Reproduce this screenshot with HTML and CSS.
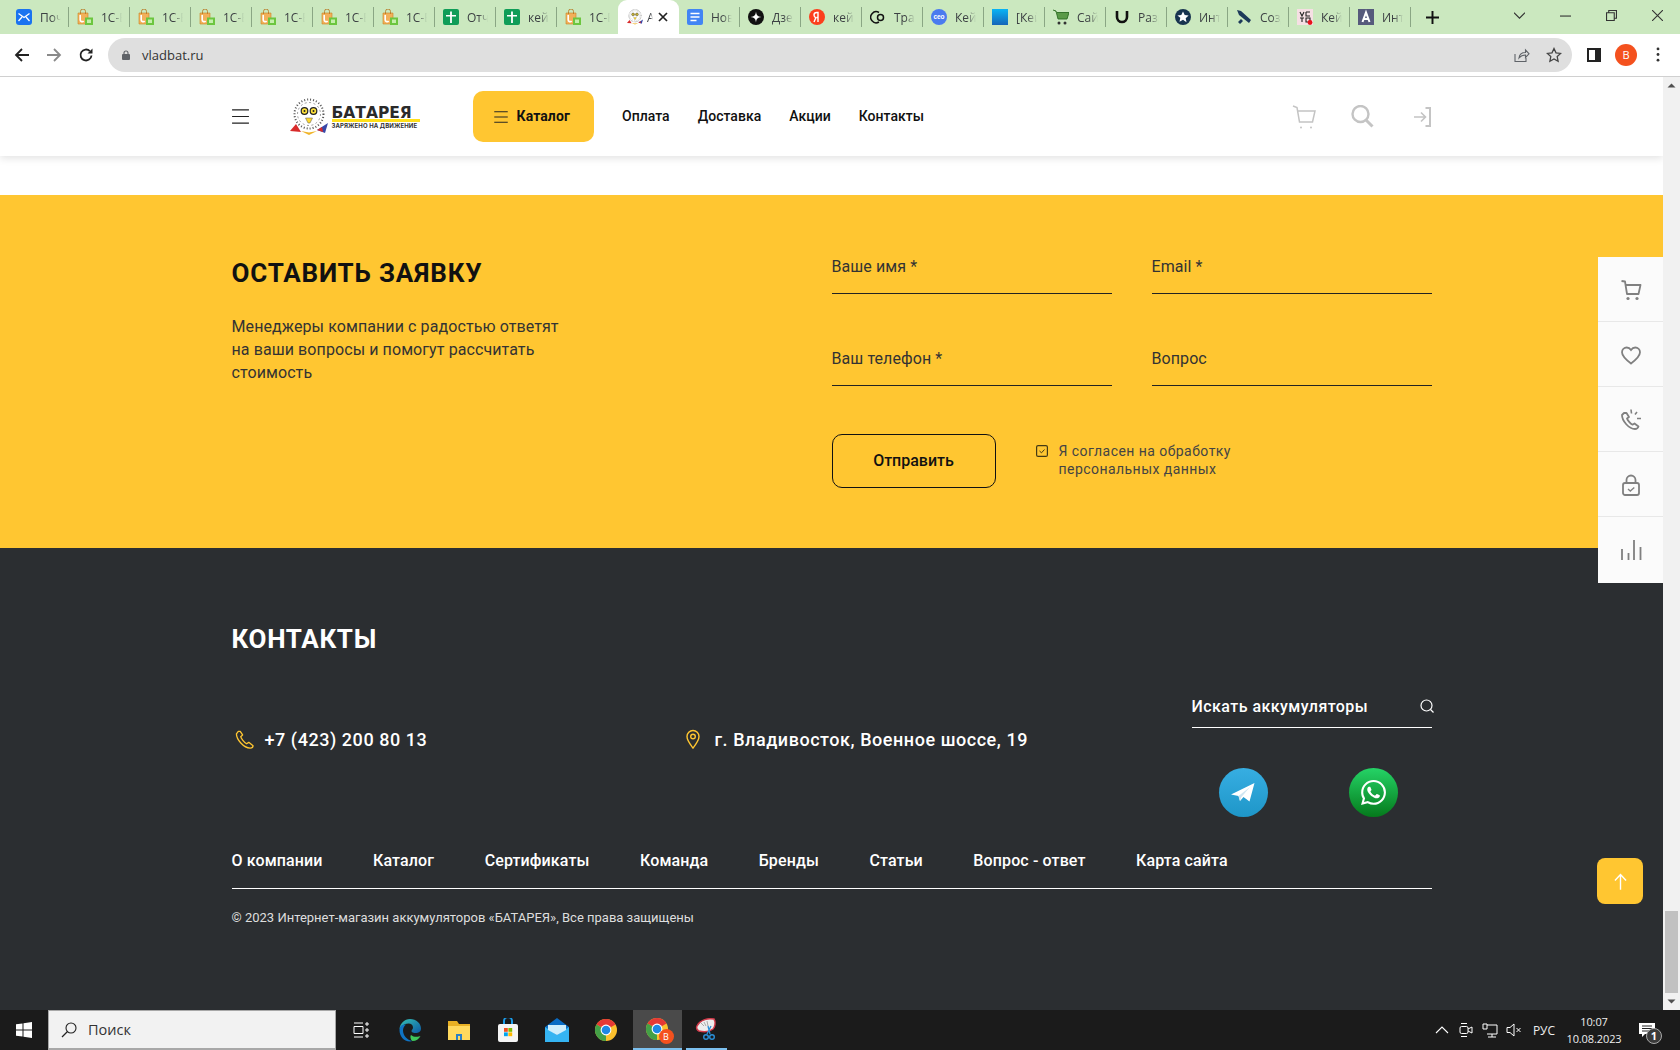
FILE: index.html
```html
<!DOCTYPE html>
<html lang="ru">
<head>
<meta charset="utf-8">
<title>БАТАРЕЯ</title>
<link rel="stylesheet" href="styles.css">
</head>
<body>
<svg class="defs" xmlns="http://www.w3.org/2000/svg">
  <defs>
    <symbol id="bag" viewBox="0 0 16 16">
      <path d="M1 4h10v11H1z" fill="#f2b05a" stroke="#c98422" stroke-width=".6"/>
      <path d="M3.5 5V2.5a2.5 2.5 0 0 1 5 0V5" fill="none" stroke="#b87c28" stroke-width=".9"/>
      <path d="M3.2 6v5c0 1.8 2.6 2.2 3.4 1" fill="none" stroke="#fff" stroke-width="1.6"/>
      <rect x="8" y="8.5" width="8" height="7.5" fill="#6cc63f"/>
      <rect x="10" y="10.5" width="4" height="3.5" fill="#c4efab"/>
    </symbol>
    <symbol id="sheet" viewBox="0 0 16 16">
      <rect width="16" height="16" rx="2" fill="#0f9d58"/>
      <path d="M7.1 2.500h1.800V6H13v1.600H8.900V14H7.100V7.600H3V6h4.100z" fill="#fff"/>
    </symbol>
    <symbol id="owl" viewBox="0 0 38 38">
      <circle cx="19" cy="16" r="14.500" fill="#fff" stroke="#555" stroke-width="2" stroke-dasharray="1 2"/>
      <circle cx="19" cy="16" r="11.500" fill="none" stroke="#999" stroke-width="1" stroke-dasharray="2 2.500"/>
      <path d="M0 33l6-7 5 8z" fill="#d82b2b"/>
      <path d="M38 25l-3 10-8-3z" fill="#3848a8"/>
      <path d="M27 32l5-3 1 5z" fill="#d82b2b"/>
      <path d="M11 33l8 4 8-4-8 1.500z" fill="#f0b429"/>
      <circle cx="14.500" cy="13" r="3.300" fill="#ffe23a" stroke="#222" stroke-width="1.200"/>
      <circle cx="23.500" cy="13" r="3.300" fill="#ffe23a" stroke="#222" stroke-width="1.200"/>
      <circle cx="14.500" cy="13" r="1" fill="#222"/>
      <circle cx="23.500" cy="13" r="1" fill="#222"/>
      <path d="M15.500 20h7l-2.500 5h-2z" fill="#ffd92e" stroke="#555" stroke-width=".5"/>
    </symbol>
    <symbol id="chrome" viewBox="0 0 24 24">
      <circle cx="12" cy="12" r="11" fill="#fbc02d"/>
      <path d="M12 12L2.47 6.500A11 11 0 0 1 21.530 6.500Z" fill="#e53935"/>
      <path d="M12 12L2.47 6.500A11 11 0 0 0 12 23Z" fill="#43a047"/>
      <circle cx="12" cy="12" r="5.400" fill="#fff"/>
      <circle cx="12" cy="12" r="4.300" fill="#1e88e5"/>
    </symbol>
    <symbol id="menu3" viewBox="0 0 18 16">
      <path d="M0 1h18M0 8h18M0 15h18" fill="none" stroke="currentColor" stroke-width="1.300"/>
    </symbol>
  </defs>
</svg>

<div class="tabstrip">
  <div class="tab"><div class="tab-in">
    <svg class="tab-ico" viewBox="0 0 16 16"><rect width="16" height="16" rx="3" fill="#1a73f0"/><path d="M2.500 4.500L8 8.500l5.500-4M2.500 12L6 8M13.500 12L10 8" fill="none" stroke="#fff" stroke-width="1.300"/></svg>
    <span class="tab-t">Поч</span></div></div>
  <div class="tab"><div class="tab-in"><svg class="tab-ico"><use href="#bag"/></svg><span class="tab-t">1С-Б</span></div></div>
  <div class="tab"><div class="tab-in"><svg class="tab-ico"><use href="#bag"/></svg><span class="tab-t">1С-Б</span></div></div>
  <div class="tab"><div class="tab-in"><svg class="tab-ico"><use href="#bag"/></svg><span class="tab-t">1С-Б</span></div></div>
  <div class="tab"><div class="tab-in"><svg class="tab-ico"><use href="#bag"/></svg><span class="tab-t">1С-Б</span></div></div>
  <div class="tab"><div class="tab-in"><svg class="tab-ico"><use href="#bag"/></svg><span class="tab-t">1С-Б</span></div></div>
  <div class="tab"><div class="tab-in"><svg class="tab-ico"><use href="#bag"/></svg><span class="tab-t">1С-Б</span></div></div>
  <div class="tab"><div class="tab-in"><svg class="tab-ico"><use href="#sheet"/></svg><span class="tab-t">Отч</span></div></div>
  <div class="tab"><div class="tab-in"><svg class="tab-ico"><use href="#sheet"/></svg><span class="tab-t">кейс</span></div></div>
  <div class="tab"><div class="tab-in no-sep"><svg class="tab-ico"><use href="#bag"/></svg><span class="tab-t">1С-Б</span></div></div>
  <div class="tab tab-active"><div class="tab-in no-sep">
    <svg class="tab-ico"><use href="#owl"/></svg><span class="tab-t tab-t-short">А</span>
    <svg class="tab-x" viewBox="0 0 10 10"><path d="M1 1l8 8M9 1l-8 8" stroke="#222" stroke-width="1.700"/></svg>
  </div></div>
  <div class="tab"><div class="tab-in">
    <svg class="tab-ico" viewBox="0 0 16 16"><rect width="16" height="16" rx="2" fill="#4285f4"/><path d="M3.500 4.500h9M3.500 8h9M3.500 11.500h6" stroke="#fff" stroke-width="1.600"/></svg>
    <span class="tab-t">Нов</span></div></div>
  <div class="tab"><div class="tab-in">
    <svg class="tab-ico" viewBox="0 0 16 16"><circle cx="8" cy="8" r="8" fill="#111"/><path d="M8 2.500C8.500 6.500 9.500 7.500 13.500 8 9.500 8.500 8.500 9.500 8 13.500 7.500 9.500 6.500 8.500 2.500 8 6.500 7.500 7.500 6.500 8 2.500z" fill="#fff"/></svg>
    <span class="tab-t">Дзе</span></div></div>
  <div class="tab"><div class="tab-in">
    <svg class="tab-ico" viewBox="0 0 16 16"><circle cx="8" cy="8" r="8" fill="#fc3f1d"/><path d="M9 13V3.500H7.800C6 3.500 5 4.600 5 6c0 1.300.6 2 1.800 2.800L5 13M9 8.500H7.500" fill="none" stroke="#fff" stroke-width="1.400"/></svg>
    <span class="tab-t">кейс</span></div></div>
  <div class="tab"><div class="tab-in">
    <svg class="tab-ico" viewBox="0 0 16 16"><path d="M9 3.500A5.500 5.500 0 1 0 9 13" fill="none" stroke="#111" stroke-width="1.500"/><circle cx="10.500" cy="8.500" r="3" fill="none" stroke="#111" stroke-width="1.500"/></svg>
    <span class="tab-t">Тра</span></div></div>
  <div class="tab"><div class="tab-in">
    <svg class="tab-ico" viewBox="0 0 16 16"><circle cx="8" cy="8" r="8" fill="#4a7bef"/><text class="ceo" x="8" y="10.300" text-anchor="middle">ceo</text></svg>
    <span class="tab-t">Кейс</span></div></div>
  <div class="tab"><div class="tab-in">
    <svg class="tab-ico" viewBox="0 0 16 16"><defs><linearGradient id="bluesq" x1="0" y1="0" x2="0" y2="1"><stop offset="0" stop-color="#07b4f5"/><stop offset="1" stop-color="#1565b8"/></linearGradient></defs><rect width="16" height="16" fill="url(#bluesq)"/></svg>
    <span class="tab-t">[Кей</span></div></div>
  <div class="tab"><div class="tab-in">
    <svg class="tab-ico" viewBox="0 0 16 16"><path d="M0 1l3 1 2 8h9l2-6.500H4" fill="#5b9a48" stroke="#2b6b22" stroke-width=".9"/><circle cx="6" cy="14" r="1.500" fill="#333"/><circle cx="12" cy="14" r="1.500" fill="#333"/></svg>
    <span class="tab-t">Сайт</span></div></div>
  <div class="tab"><div class="tab-in">
    <svg class="tab-ico" viewBox="0 0 16 16"><path d="M3 2v6a5 5 0 0 0 10 0V2" fill="none" stroke="#111" stroke-width="2.600"/></svg>
    <span class="tab-t">Разр</span></div></div>
  <div class="tab"><div class="tab-in">
    <svg class="tab-ico" viewBox="0 0 16 16"><circle cx="8" cy="8" r="8" fill="#17344f"/><path d="M8 2.500l1.700 3.600 3.900.5-2.900 2.700.8 3.900L8 10.800l-3.500 1.900.8-3.900L2.400 6.600l3.900-.5z" fill="#fff"/></svg>
    <span class="tab-t">Инт</span></div></div>
  <div class="tab"><div class="tab-in">
    <svg class="tab-ico" viewBox="0 0 16 16"><path d="M1 1l4 1 10 9-2 3L3 6zM2 13l3-3 2 2-3 3z" fill="#1d3a5a"/></svg>
    <span class="tab-t">Созд</span></div></div>
  <div class="tab"><div class="tab-in">
    <svg class="tab-ico" viewBox="0 0 16 16"><rect width="16" height="16" fill="#f6dfe4"/><path d="M3 3l2 4 2-4M9 3h4M9 3v4h4M3 9h4M5 9v4M9 9h4v4H9z" fill="none" stroke="#222" stroke-width="1.100"/><circle cx="13" cy="13.500" r="2.400" fill="#e8141c"/></svg>
    <span class="tab-t">Кейс</span></div></div>
  <div class="tab"><div class="tab-in">
    <svg class="tab-ico" viewBox="0 0 16 16"><rect width="16" height="16" fill="#565a7c"/><path d="M4.500 13L8 3.500 11.500 13M5.800 10h4.400" fill="none" stroke="#fff" stroke-width="2"/></svg>
    <span class="tab-t">Инт</span></div></div>
  <svg class="tab-plus" viewBox="0 0 12 12"><path d="M6 0v12M0 6h12" stroke="#111" stroke-width="1.800"/></svg>
  <div class="winctl">
    <div class="winbtn"><svg class="win-ico" viewBox="0 0 10 10"><path d="M0 2.500l5 5 5-5" fill="none" stroke="#333"/></svg></div>
    <div class="winbtn"><svg class="win-ico" viewBox="0 0 10 10"><path d="M0 5.500h10" stroke="#333"/></svg></div>
    <div class="winbtn"><svg class="win-ico" viewBox="0 0 10 10"><path d="M.5 2.500h7v7h-7zM2.500 2.500v-2h7v7h-2" fill="none" stroke="#333"/></svg></div>
    <div class="winbtn"><svg class="win-ico" viewBox="0 0 10 10"><path d="M0 0l10 10M10 0L0 10" stroke="#333"/></svg></div>
  </div>
</div>

<div class="toolbar">
  <div class="navbtns">
    <div class="navbtn"><svg class="ico16" viewBox="0 0 16 16"><path d="M15 8H2M8 2L2 8l6 6" fill="none" stroke="#222" stroke-width="1.800"/></svg></div>
    <div class="navbtn"><svg class="ico16" viewBox="0 0 16 16"><path d="M1 8h13M8 2l6 6-6 6" fill="none" stroke="#8a8a8a" stroke-width="1.800"/></svg></div>
    <div class="navbtn"><svg class="ico16" viewBox="0 0 16 16"><path d="M13.500 8.500a5.500 5.500 0 1 1-1.600-4.400" fill="none" stroke="#222" stroke-width="1.800"/><path d="M14.500 1.500v5h-5z" fill="#222"/></svg></div>
  </div>
  <div class="addr">
    <svg class="lock" viewBox="0 0 8 10"><rect y="4" width="8" height="6" rx="1" fill="#5f6368"/><path d="M2 4.500V3a2 2 0 0 1 4 0v1.500" fill="none" stroke="#5f6368" stroke-width="1.100"/></svg>
    <span class="url">vladbat.ru</span>
    <div class="addr-icons">
      <div class="navbtn"><svg class="ico16" viewBox="0 0 16 16"><path d="M1 7v7.500h11V11" fill="none" stroke="#5f6368" stroke-width="1.100"/><path d="M5 11c.5-4 3-5.500 6.500-5.500V3L15 6.800l-3.500 3.700V8C9 8 6.800 8.800 5 11z" fill="none" stroke="#5f6368" stroke-width="1.100"/></svg></div>
      <div class="navbtn"><svg class="ico16" viewBox="0 0 16 16"><path d="M8 1.500l2 4.300 4.700.6-3.500 3.200.9 4.700L8 12l-4.100 2.300.9-4.700L1.300 6.400 6 5.800z" fill="none" stroke="#444" stroke-width="1.300"/></svg></div>
    </div>
  </div>
  <div class="tool-right">
    <div class="navbtn"><svg class="ico14" viewBox="0 0 14 14"><rect x="1" y="1" width="12" height="12" fill="#fff" stroke="#222" stroke-width="2"/><rect x="8" y="1" width="5" height="12" fill="#222"/></svg></div>
    <div class="navbtn"><div class="avatar">В</div></div>
    <div class="navbtn"><svg class="dots" viewBox="0 0 4 16"><circle cx="2" cy="2" r="1.500" fill="#333"/><circle cx="2" cy="8" r="1.500" fill="#333"/><circle cx="2" cy="14" r="1.500" fill="#333"/></svg></div>
  </div>
</div>

<div class="viewport">
  <div class="page">
    <header class="site-head">
      <div class="container head-row">
        <svg class="burger"><use href="#menu3"/></svg>
        <div class="logo">
          <svg class="logo-owl"><use href="#owl"/></svg>
          <div class="logo-text">
            <div class="logo-name">БАТАРЕЯ</div>
            <div class="logo-sub">ЗАРЯЖЕНО НА ДВИЖЕНИЕ</div>
          </div>
        </div>
        <a class="catalog-btn"><svg class="catalog-ico"><use href="#menu3"/></svg>Каталог</a>
        <nav class="head-nav">
          <a>Оплата</a><a>Доставка</a><a>Акции</a><a>Контакты</a>
        </nav>
        <div class="head-icons">
          <svg class="ico24" viewBox="0 0 24 24"><path d="M1 1l4 1.500L7.500 17h13L23 6H5" fill="none" stroke="#c4c4c4" stroke-width="1.500"/><circle cx="9" cy="22.500" r="1" fill="#c4c4c4"/><circle cx="19" cy="22.500" r="1" fill="#c4c4c4"/></svg>
          <svg class="ico24" viewBox="0 0 24 24"><circle cx="10.500" cy="9" r="8" fill="none" stroke="#c4c4c4" stroke-width="2.400"/><path d="M16 15l6.500 6.500" stroke="#c4c4c4" stroke-width="3"/></svg>
          <svg class="ico24" viewBox="0 0 24 24"><path d="M17.500 3h4.500v18h-4.500" fill="none" stroke="#c4c4c4" stroke-width="2"/><path d="M6 12h11M13 7.500l4.500 4.500-4.500 4.500" fill="none" stroke="#c4c4c4" stroke-width="1.600"/></svg>
        </div>
      </div>
    </header>

    <section class="request">
      <div class="container request-grid">
        <div class="request-left">
          <h2 class="title">ОСТАВИТЬ ЗАЯВКУ</h2>
          <p class="request-text">Менеджеры компании с радостью ответят<br>на ваши вопросы и помогут рассчитать<br>стоимость</p>
        </div>
        <form class="request-form">
          <div class="field">Ваше имя *</div>
          <div class="field">Email *</div>
          <div class="field">Ваш телефон *</div>
          <div class="field">Вопрос</div>
          <div class="form-foot">
            <button class="send" type="button">Отправить</button>
            <div class="agree">
              <svg class="agree-box" viewBox="0 0 12 12"><rect x=".6" y=".6" width="10.800" height="10.800" rx="1.500" fill="none" stroke="#443a14" stroke-width="1.200"/><path d="M3.500 6l2 1.800 3-3.300" fill="none" stroke="#443a14"/></svg>
              <span class="agree-text">Я согласен на обработку<br>персональных данных</span>
            </div>
          </div>
        </form>
      </div>
    </section>

    <footer class="foot">
      <div class="container">
        <h2 class="title title-light">КОНТАКТЫ</h2>
        <div class="foot-main">
          <div class="contacts">
            <div class="contact contact-phone">
              <svg class="contact-ico" viewBox="0 0 20 20"><path d="M3.500 1.500L1.500 4c0 6 7.500 15 14.500 15 2 0 3-1.500 3-2.500l-4.500-3.500-2.300 1.500C9.500 13 6.500 9 6 7l2-1.800L5.500 1.500z" fill="none" stroke="#ffc631" stroke-width="1.400" stroke-linejoin="round"/></svg>
              <span>+7 (423) 200 80 13</span>
            </div>
            <div class="contact">
              <svg class="contact-ico contact-pin" viewBox="0 0 14 20"><path d="M7 19C4 15 1 11.500 1 7.500a6 6 0 0 1 12 0C13 11.500 10 15 7 19z" fill="none" stroke="#ffc631" stroke-width="1.400"/><circle cx="7" cy="7.500" r="2.300" fill="none" stroke="#ffc631" stroke-width="1.400"/></svg>
              <span>г. Владивосток, Военное шоссе, 19</span>
            </div>
          </div>
          <div class="foot-side">
            <div class="foot-search">
              <span>Искать аккумуляторы</span>
              <svg class="foot-search-ico" viewBox="0 0 14 14"><circle cx="6.500" cy="6.500" r="5.500" fill="none" stroke="#fff" stroke-width="1.200"/><path d="M10.500 10.500l3 3" stroke="#fff" stroke-width="1.200"/></svg>
            </div>
            <div class="socials">
              <div class="social social-tg">
                <svg class="social-svg-tg" viewBox="0 0 49 49"><path d="M12 26.500L35.500 15 30.500 33.500 24.500 29 21 33l-1.500-5z" fill="#fff"/><path d="M19.500 28L31 19l-9 10.500L21 33z" fill="#cfe6f2"/></svg>
              </div>
              <div class="social social-wa">
                <svg class="social-svg-wa" viewBox="0 0 24 24"><path fill="#fff" d="M17.472 14.382c-.297-.149-1.758-.867-2.030-.967-.273-.099-.471-.148-.670.150-.197.297-.767.966-.940 1.164-.173.199-.347.223-.644.075-.297-.150-1.255-.463-2.390-1.475-.883-.788-1.480-1.761-1.653-2.059-.173-.297-.018-.458.130-.606.134-.133.298-.347.446-.520.149-.174.198-.298.298-.497.099-.198.050-.371-.025-.520-.075-.149-.669-1.612-.916-2.207-.242-.579-.487-.500-.669-.510-.173-.008-.371-.010-.570-.010-.198 0-.520.074-.792.372-.272.297-1.040 1.016-1.040 2.479 0 1.462 1.065 2.875 1.213 3.074.149.198 2.096 3.200 5.077 4.487.709.306 1.262.489 1.694.625.712.227 1.360.195 1.871.118.571-.085 1.758-.719 2.006-1.413.248-.694.248-1.289.173-1.413-.074-.124-.272-.198-.570-.347m-5.421 7.403h-.004a9.870 9.870 0 01-5.031-1.378l-.361-.214-3.741.982.998-3.648-.235-.374a9.860 9.860 0 01-1.510-5.260c.001-5.450 4.436-9.884 9.888-9.884 2.640 0 5.122 1.030 6.988 2.898a9.825 9.825 0 012.893 6.994c-.003 5.450-4.437 9.884-9.885 9.884m8.413-18.297A11.815 11.815 0 0012.050 0C5.495 0 .160 5.335.157 11.892c0 2.096.547 4.142 1.588 5.945L.057 24l6.305-1.654a11.882 11.882 0 005.683 1.448h.005c6.554 0 11.890-5.335 11.893-11.893a11.821 11.821 0 00-3.480-8.413z"/></svg>
              </div>
            </div>
          </div>
        </div>
        <nav class="foot-nav">
          <a>О компании</a><a>Каталог</a><a>Сертификаты</a><a>Команда</a><a>Бренды</a><a>Статьи</a><a>Вопрос - ответ</a><a>Карта сайта</a>
        </nav>
        <p class="copy">© 2023 Интернет-магазин аккумуляторов «БАТАРЕЯ», Все права защищены</p>
      </div>
    </footer>

    <aside class="side-panel">
      <div class="side-item"><svg class="ico24" viewBox="0 0 24 24"><path d="M2.500 3l3.500.5L8 16h11.500L21.500 7H6.500" fill="none" stroke="#808080" stroke-width="1.800" stroke-linejoin="round"/><circle cx="9" cy="20.500" r="1.600" fill="#808080"/><circle cx="18" cy="20.500" r="1.600" fill="#808080"/></svg></div>
      <div class="side-item"><svg class="ico24" viewBox="0 0 24 24"><path d="M12 20.500C6 16 3 13 3 9.300 3 6.500 5.200 4.500 7.700 4.500c1.800 0 3.300.9 4.300 2.400 1-1.500 2.500-2.400 4.300-2.400C18.800 4.500 21 6.500 21 9.300c0 3.700-3 6.700-9 11.200z" fill="none" stroke="#808080" stroke-width="1.800"/></svg></div>
      <div class="side-item"><svg class="ico24" viewBox="0 0 24 24"><path d="M5 5L3 7c0 6 7 14 13 14 1.500 0 3-1 3.500-2.500l-4-3-2 1.200c-2-.8-5-4.500-5.500-6.200L10 9 7.500 5z" fill="none" stroke="#808080" stroke-width="1.800" stroke-linejoin="round"/><path d="M12 1.500l.5 4M18 4l-2 2.500M22 10.500h-4" stroke="#808080" stroke-width="1.600"/></svg></div>
      <div class="side-item"><svg class="ico24" viewBox="0 0 24 24"><rect x="4" y="10" width="16" height="12" rx="2" fill="none" stroke="#808080" stroke-width="1.800"/><path d="M7.500 10V7a4.500 4.500 0 0 1 9 0v3" fill="none" stroke="#808080" stroke-width="1.800"/><path d="M9 16l2.300 2 4-3.500" fill="none" stroke="#808080" stroke-width="1.400"/></svg></div>
      <div class="side-item"><svg class="ico24" viewBox="0 0 24 24"><path d="M3 11v11M9.500 15v7M15 2v20M21.500 9v13" stroke="#808080" stroke-width="1.800"/></svg></div>
    </aside>
    <div class="to-top"><svg class="to-top-ico" viewBox="0 0 14 18"><path d="M7 18V2M1 8l6-6.500L13 8" fill="none" stroke="#fff" stroke-width="1.500"/></svg></div>
  </div>
  <div class="scrollbar">
    <svg class="sb-arrow" viewBox="0 0 17 17"><path d="M4.500 10.500L8.500 6.500l4 4z" fill="#505050"/></svg>
    <div class="sb-thumb"></div>
    <svg class="sb-arrow" viewBox="0 0 17 17"><path d="M4.500 6.500l4 4 4-4z" fill="#505050"/></svg>
  </div>
</div>

<div class="taskbar">
  <div class="start"><svg class="start-ico" viewBox="0 0 16 16"><path d="M0 2.300L6.500 1.400V7.500H0zM7.500 1.200L16 0v7.500H7.500zM0 8.500h6.500v6.100L0 13.700zM7.500 8.500H16V16l-8.500-1.200z" fill="#fff"/></svg></div>
  <div class="task-search">
    <svg class="ico16" viewBox="0 0 16 16"><circle cx="10" cy="6" r="5" fill="none" stroke="#222" stroke-width="1.100"/><path d="M6.500 9.500L1 15" stroke="#222" stroke-width="1.200"/></svg>
    <span>Поиск</span>
  </div>
  <div class="task-cell"><svg class="ico16" viewBox="0 0 16 16"><path d="M1 1h9M1 15h9M1 4.500h9v7H1zM13 1h2v2h-2zM13 7h2v2h-2zM13 13h2v2h-2z" fill="none" stroke="#fff"/></svg></div>
  <div class="task-cell">
    <svg class="task-ico" viewBox="0 0 24 24"><defs><linearGradient id="edge1" x1="0" y1="0" x2="1" y2="1"><stop offset="0" stop-color="#35c1b5"/><stop offset="1" stop-color="#0c59a4"/></linearGradient></defs><path d="M12 1c6.500 0 11 4.500 11 9.500 0 3.500-3 4.500-5 4.500-2.500 0-4.500-.5-4.500-2 0-1.300 1.500-1.500 1.500-3.500C15 7 13 5.500 10.500 5.500 5.500 5.500 3 9 1.500 11 2 5.500 6.500 1 12 1z" fill="url(#edge1)"/><path d="M1.500 12C1.500 7.500 5 6.500 8 6.500c-2 1.500-3 3.500-3 6 0 5 4 9.500 9.500 10.500C13.500 23.300 12.500 23.500 12 23.500 5.500 23.500 1.500 18 1.500 12z" fill="#0f73c4"/><path d="M14.500 23c3.500 0 6.500-2 8-5-2 1-7 1.500-9.500-1-1.500 2 .5 6 1.500 6z" fill="#3fc85a"/></svg>
  </div>
  <div class="task-cell">
    <svg class="task-ico" viewBox="0 0 24 24"><path d="M1 3h9l2 3h11v16H1z" fill="#e8b024"/><path d="M1 8h22v14H1z" fill="#ffd95e"/><path d="M9 22v-6h6v6h-2v-4h-2v4z" fill="#2a7fc6"/></svg>
  </div>
  <div class="task-cell">
    <svg class="task-ico" viewBox="0 0 24 24"><path d="M8 6V3a4 4 0 0 1 8 0v3" fill="none" stroke="#1a9be8" stroke-width="2"/><rect x="2" y="6" width="20" height="18" rx="2" fill="#f5f5f5"/><rect x="8" y="10" width="3.800" height="3.800" fill="#f25022"/><rect x="12.400" y="10" width="3.800" height="3.800" fill="#7fba00"/><rect x="8" y="14.400" width="3.800" height="3.800" fill="#00a4ef"/><rect x="12.400" y="14.400" width="3.800" height="3.800" fill="#ffb900"/></svg>
  </div>
  <div class="task-cell">
    <svg class="task-ico" viewBox="0 0 24 24"><path d="M0 9L12 0l12 9v15H0z" fill="#0a6cc4"/><path d="M0 9l12 8 12-8v15H0z" fill="#35b4f2"/><path d="M3 7h18v5l-9 5-9-5z" fill="#cfeefc"/></svg>
  </div>
  <div class="task-cell"><svg class="task-ico"><use href="#chrome"/></svg></div>
  <div class="task-cell task-active">
    <svg class="task-ico"><use href="#chrome"/></svg>
    <span class="task-badge">В</span>
  </div>
  <div class="task-cell task-run">
    <svg class="task-ico" viewBox="0 0 24 24"><path d="M3 9c3-6 10-8 17-7 2 3 1 8-1 10-4 3-10 3-14 2-2-1-3-3-2-5z" fill="#eee" stroke="#d23a4a" stroke-width="1.500"/><path d="M7 6l3 3M10 5l2 4M13 4l1 5" stroke="#aaa"/><path d="M14 9l2 8M17 9l-4 8" stroke="#2a8fd8" stroke-width="1.300"/><circle cx="12" cy="20" r="2.300" fill="none" stroke="#2a8fd8" stroke-width="1.400"/><circle cx="18" cy="20" r="2.300" fill="none" stroke="#2a8fd8" stroke-width="1.400"/></svg>
  </div>
  <div class="tray">
    <div class="tray-cell"><svg class="ico14" viewBox="0 0 14 14"><path d="M1 10l6-6 6 6" fill="none" stroke="#fff" stroke-width="1.100"/></svg></div>
    <div class="tray-cell"><svg class="ico16" viewBox="0 0 16 16"><rect x="2" y="4.500" width="8" height="7" rx="1.500" fill="none" stroke="#fff"/><path d="M10 7l4-2v6l-4-2M3 1.500h6M3 14.500h6" fill="none" stroke="#fff"/></svg></div>
    <div class="tray-cell"><svg class="ico16" viewBox="0 0 16 16"><path d="M1 2h4v5H1zM5 3h10v9H5M10 12v3M6 15h8" fill="none" stroke="#fff"/></svg></div>
    <div class="tray-cell"><svg class="ico16" viewBox="0 0 16 16"><path d="M1 5.500h3L8 2v12L4 10.500H1zM10.500 6l4 4M14.500 6l-4 4" fill="none" stroke="#fff"/></svg></div>
    <div class="tray-lang">РУС</div>
    <div class="tray-clock"><span>10:07</span><span>10.08.2023</span></div>
    <div class="tray-notif">
      <svg class="ico16" viewBox="0 0 16 16"><path d="M0 1h16v11H6l-3 3v-3H0z" fill="#fff"/><path d="M3 4h10M3 6.500h10M3 9h7" stroke="#222"/></svg>
      <span class="notif-badge">1</span>
    </div>
  </div>
</div>
</body>
</html>
```
FILE: styles.css
```css
* { box-sizing: border-box; }
html, body { margin: 0; padding: 0; }
body {
  width: 1680px;
  height: 1050px;
  overflow: hidden;
  display: flex;
  flex-direction: column;
  font-family: Roboto, "Liberation Sans", sans-serif;
  background: #fff;
}
a { color: inherit; text-decoration: none; }
h2, p { margin: 0; }
.defs { display: block; width: 0; height: 0; flex: none; }

/* Browser tab strip */
.tabstrip {
  flex: none;
  height: 34px;
  display: flex;
  align-items: center;
  padding-left: 8px;
  background: #cbe8bf;
}
.tab {
  width: 61px;
  height: 34px;
  flex: none;
  display: flex;
  align-items: center;
  padding-left: 8px;
}
.tab-in {
  flex: 1;
  height: 20px;
  display: flex;
  align-items: center;
  gap: 8px;
  border-right: 1px solid #8aa684;
  overflow: hidden;
}
.tab-in.no-sep { border-right: 0; }
.tab-ico { width: 16px; height: 16px; flex: none; }
.ceo { font: 700 6.500px "Liberation Sans", sans-serif; fill: #fff; }
.tab-t {
  font: 12px "Open Sans", "Noto Sans", sans-serif;
  color: #3c4043;
  width: 21px;
  flex: none;
  white-space: nowrap;
  overflow: hidden;
  -webkit-mask-image: linear-gradient(90deg, #000 55%, transparent);
  mask-image: linear-gradient(90deg, #000 55%, transparent);
}
.tab-active {
  background: #fff;
  border-radius: 9px 9px 0 0;
  padding-left: 9px;
}
.tab-t-short { width: 6px; margin-left: -4px; }
.tab-x { width: 10px; height: 10px; flex: none; margin-left: -3px; }
.tab-plus { width: 13px; height: 13px; flex: none; margin-left: 15px; }
.winctl { margin-left: auto; display: flex; align-self: flex-start; }
.winbtn { width: 46px; height: 30px; display: flex; align-items: center; justify-content: center; }
.win-ico { width: 11px; height: 11px; }

/* Browser toolbar */
.toolbar {
  flex: none;
  height: 43px;
  display: flex;
  align-items: center;
  background: #fff;
  border-bottom: 1px solid #d0d0d0;
  padding: 0 6px 1px;
}
.navbtns { display: flex; }
.navbtn { width: 32px; height: 32px; display: flex; align-items: center; justify-content: center; }
.ico16 { width: 16px; height: 16px; flex: none; }
.ico14 { width: 14px; height: 14px; flex: none; }
.ico24 { width: 24px; height: 24px; flex: none; display: block; }
.addr {
  margin-left: 6px;
  width: 1464px;
  height: 34px;
  border-radius: 17px;
  background: #dfdfdf;
  display: flex;
  align-items: center;
  padding: 0 2px 0 14px;
}
.lock { width: 8px; height: 10px; flex: none; }
.url { margin-left: 12px; font: 13px "Open Sans", "Noto Sans", sans-serif; color: #333; }
.addr-icons { margin-left: auto; display: flex; }
.tool-right { margin-left: 6px; display: flex; }
.avatar {
  width: 22px; height: 22px; border-radius: 50%;
  background: #f4511e; color: #fff;
  font: 11px/22px "Open Sans", sans-serif; text-align: center;
}
.dots { width: 4px; height: 15px; }

/* Viewport */
.viewport { flex: none; height: 933px; display: flex; }
.page {
  position: relative;
  width: 1663px;
  height: 933px;
  overflow: hidden;
  display: flex;
  flex-direction: column;
  background: #fff;
}
.scrollbar { width: 17px; background: #f1f1f1; display: flex; flex-direction: column; align-items: center; }
.sb-arrow { width: 17px; height: 17px; flex: none; }
.sb-thumb { margin-top: auto; width: 13px; height: 82px; background: #c1c1c1; }
.container { width: 1200px; margin: 0 auto; }

/* Site header */
.site-head {
  flex: none;
  height: 79px;
  background: #fff;
  box-shadow: 0 2px 8px rgba(0,0,0,.12);
  margin-bottom: 39px;
}
.head-row { height: 79px; display: flex; align-items: center; }
.burger { width: 17px; height: 15px; color: #222; flex: none; margin-right: 1px; }
.logo { display: flex; align-items: center; margin-left: 40px; width: 183px; flex: none; }
.logo-owl { width: 38px; height: 38px; flex: none; }
.logo-text { margin-left: 4px; width: 88px; margin-top: 2px; }
.logo-name {
  font: 700 15.500px/14px "DejaVu Sans", "Liberation Sans", sans-serif;
  color: #2a2a2a;
  white-space: nowrap;
  padding-bottom: 2px;
  height: 16px;
  background: linear-gradient(transparent 13px, #ffe01a 13px);
}
.logo-sub {
  font: 700 6px/8px Inter, "Liberation Sans", sans-serif;
  color: #333;
  white-space: nowrap;
  letter-spacing: .1px;
}
.catalog-btn {
  flex: none;
  width: 121px;
  height: 51px;
  border-radius: 10px;
  background: #ffc631;
  display: flex;
  align-items: center;
  padding: 0 0 2px 21px;
  gap: 9px;
  font-size: 14px;
  font-weight: 700;
  letter-spacing: .1px;
  color: #111;
}
.catalog-ico { width: 14px; height: 12px; color: #222; flex: none; margin-top: 2px; }
.head-nav { margin-left: 28.500px; padding-bottom: 2px; display: flex; gap: 28px; font-size: 14px; font-weight: 500; color: #111; letter-spacing: .03px; }
.head-icons { margin-left: auto; display: flex; gap: 34px; }

/* Request section */
.request { flex: none; background: #ffc631; padding: 53px 0 60px; }
.request-grid { display: flex; }
.request-left { width: 600px; flex: none; padding-top: 10px; }
.title { font-size: 26px; line-height: 31px; font-weight: 700; color: #111; letter-spacing: .8px; }
.title-light { color: #fff; letter-spacing: .67px; }
.request-text { margin-top: 25.500px; font-size: 16px; line-height: 23px; color: #333; letter-spacing: .09px; }
.request-form {
  width: 600px;
  display: grid;
  grid-template-columns: 280px 280px;
  column-gap: 40px;
  row-gap: 46px;
}
.field {
  height: 46px;
  line-height: 38px;
  font-size: 16px;
  color: #333;
  letter-spacing: .08px;
  border-bottom: 1px solid #222;
}
.form-foot { grid-column: 1 / -1; display: flex; gap: 40px; margin-top: 2px; }
.send {
  width: 164px;
  height: 54px;
  border: 1.500px solid #111;
  border-radius: 10px;
  background: transparent;
  font: 500 16px Roboto, sans-serif;
  color: #111;
  padding: 0 0 2px;
}
.agree { display: flex; align-items: flex-start; gap: 11px; padding-top: 8px; }
.agree-box { width: 12px; height: 12px; flex: none; margin-top: 3px; }
.agree-text { font-size: 14px; line-height: 18px; color: #444; letter-spacing: .45px; }

/* Footer */
.foot { flex: 1; background: #2b2e31; padding-top: 76px; color: #fff; }
.foot-main { margin-top: 35px; display: flex; }
.contacts { flex: 1; display: flex; padding-top: 37px; font-size: 18px; font-weight: 500; letter-spacing: .55px; }
.contact { display: flex; align-items: center; height: 24px; }
.contact-phone { width: 454px; }
.contact-ico { width: 19px; height: 19px; flex: none; margin: 0 11px 0 3px; }
.contact-pin { width: 14px; height: 20px; margin: 0 15px 0 0; }
.foot-side { width: 240px; flex: none; }
.foot-search {
  height: 38px;
  display: flex;
  align-items: center;
  justify-content: space-between;
  padding-bottom: 5px;
  border-bottom: 1px solid #fff;
  font-size: 16px;
  font-weight: 500;
  letter-spacing: .45px;
}
.foot-search-ico { width: 14px; height: 14px; flex: none; margin-right: -2px; }
.socials { margin-top: 40px; padding-left: 27px; display: flex; gap: 81px; }
.social { width: 49px; height: 49px; border-radius: 50%; display: flex; align-items: center; justify-content: center; }
.social-tg { background: linear-gradient(#37aee2, #1e96c8); }
.social-wa { background: linear-gradient(#25d366, #057a1c); }
.social-svg-tg { width: 49px; height: 49px; }
.social-svg-wa { width: 25px; height: 25px; }
.foot-nav {
  margin-top: 34px;
  padding-bottom: 17px;
  border-bottom: 1px solid #fff;
  display: flex;
  gap: 50.500px;
  font-size: 16px;
  line-height: 20px;
  font-weight: 500;
  letter-spacing: .12px;
}
.copy { margin-top: 20px; font-size: 13px; line-height: 18px; color: #dedede; }

/* Overlays on the page */
.side-panel {
  position: absolute;
  top: 180px;
  right: 0;
  width: 65px;
  background: #fbfbfb;
}
.side-item {
  height: 65px;
  display: flex;
  align-items: center;
  justify-content: center;
  padding-top: 2px;
  border-bottom: 1px solid #e8e8e8;
}
.side-item:last-child { border-bottom: 0; height: 66px; padding-top: 0; }
.to-top {
  position: absolute;
  right: 20px;
  bottom: 106px;
  width: 46px;
  height: 46px;
  border-radius: 8px;
  background: #ffc631;
  display: flex;
  align-items: center;
  justify-content: center;
}
.to-top-ico { width: 13px; height: 17px; }

/* Windows taskbar */
.taskbar { flex: none; height: 40px; display: flex; background: #1b1b1b; color: #fff; }
.start { width: 48px; display: flex; align-items: center; justify-content: center; }
.start-ico { width: 16px; height: 16px; }
.task-search {
  width: 288px;
  flex: none;
  display: flex;
  align-items: center;
  gap: 11px;
  padding-left: 12px;
  background: #f2f2f2;
  border: 1px solid #a8a8a8;
  border-bottom-width: 2px;
  font: 14.500px "Open Sans", "Noto Sans", sans-serif;
  color: #333;
}
.task-cell { position: relative; width: 49px; flex: none; display: flex; align-items: center; justify-content: center; }
.task-ico { width: 24px; height: 24px; }
.task-active { margin-left: 2.500px; background: #4a4a4a; border-bottom: 2px solid #7cc0ef; }
.task-run { width: 41px; margin-left: 4px; border-bottom: 2px solid #7cc0ef; }
.task-badge {
  position: absolute;
  left: 26px;
  top: 19px;
  width: 15px;
  height: 15px;
  border-radius: 50%;
  background: #f4511e;
  font: 9px/15px "Open Sans", sans-serif;
  text-align: center;
}
.tray { margin-left: auto; display: flex; align-items: center; padding-right: 12px; }
.tray-cell { width: 24px; display: flex; justify-content: center; }
.tray-lang { width: 36px; font: 12px "Open Sans", "Noto Sans", sans-serif; text-align: center; color: #eee; }
.tray-clock {
  width: 64px;
  display: flex;
  flex-direction: column;
  align-items: center;
  font: 11px/17px "Open Sans", "Noto Sans", sans-serif;
  letter-spacing: -.1px;
  color: #eee;
}
.tray-notif { position: relative; width: 42px; display: flex; justify-content: center; }
.notif-badge {
  position: absolute;
  left: 20px;
  top: 6px;
  width: 16px;
  height: 16px;
  border-radius: 50%;
  background: #3a3a3a;
  border: 1px solid #aaa;
  font: 700 11px/14px "Open Sans", sans-serif;
  text-align: center;
}
```
